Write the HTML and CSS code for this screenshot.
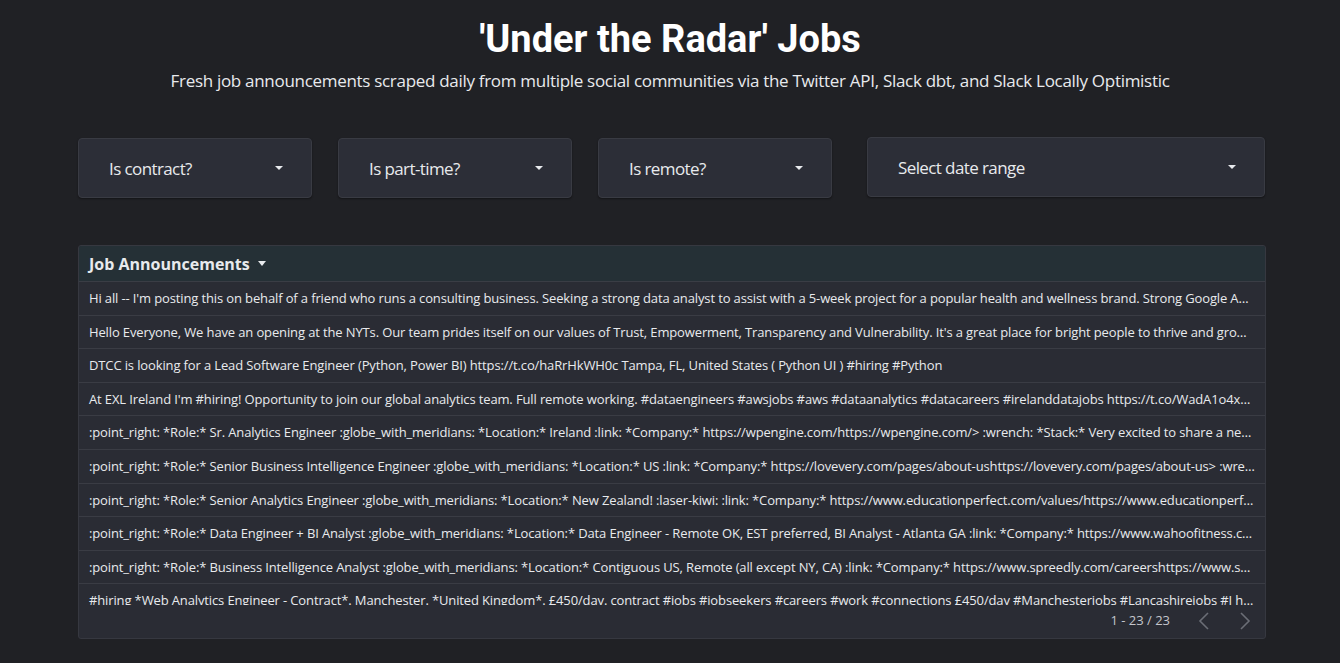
FILE: index.html
```html
<!DOCTYPE html>
<html lang="en">
<head>
<meta charset="utf-8">
<title>'Under the Radar' Jobs</title>
<link rel="stylesheet" href="styles.css">
</head>
<body>
<div class="page">
  <header class="hero">
    <h1 class="title">'Under the Radar' Jobs</h1>
    <p class="subtitle">Fresh job announcements scraped daily from multiple social communities via the Twitter API, Slack dbt, and Slack Locally Optimistic</p>
  </header>

  <div class="filters">
    <div class="filter"><span class="filter-label">Is contract?</span><span class="caret"></span></div>
    <div class="filter"><span class="filter-label">Is part-time?</span><span class="caret"></span></div>
    <div class="filter"><span class="filter-label">Is remote?</span><span class="caret"></span></div>
    <div class="filter filter-wide"><span class="filter-label">Select date range</span><span class="caret"></span></div>
  </div>

  <section class="table">
    <div class="table-head">Job Announcements <span class="caret caret-small"></span></div>
    <div class="table-body">
      <div class="row">Hi all -- I'm posting this on behalf of a friend who runs a consulting business. Seeking a strong data analyst to assist with a 5-week project for a popular health and wellness brand. Strong Google Analytics experience required.</div>
      <div class="row">Hello Everyone, We have an opening at the NYTs. Our team prides itself on our values of Trust, Empowerment, Transparency and Vulnerability. It's a great place for bright people to thrive and grow in their careers.</div>
      <div class="row">DTCC is looking for a Lead Software Engineer (Python, Power BI) https://t.co/haRrHkWH0c Tampa, FL, United States ( Python UI ) #hiring #Python</div>
      <div class="row">At EXL Ireland I'm #hiring! Opportunity to join our global analytics team. Full remote working. #dataengineers #awsjobs #aws #dataanalytics #datacareers #irelanddatajobs https://t.co/WadA1o4xQz #analyticsjobs</div>
      <div class="row">:point_right: *Role:* Sr. Analytics Engineer :globe_with_meridians: *Location:* Ireland :link: *Company:* https://wpengine.com/https://wpengine.com/&gt; :wrench: *Stack:* Very excited to share a new opening</div>
      <div class="row">:point_right: *Role:* Senior Business Intelligence Engineer :globe_with_meridians: *Location:* US :link: *Company:* https://lovevery.com/pages/about-ushttps://lovevery.com/pages/about-us&gt; :wrench: *Stack:*</div>
      <div class="row">:point_right: *Role:* Senior Analytics Engineer :globe_with_meridians: *Location:* New Zealand! :laser-kiwi: :link: *Company:* https://www.educationperfect.com/values/https://www.educationperfect.com/values/</div>
      <div class="row">:point_right: *Role:* Data Engineer + BI Analyst :globe_with_meridians: *Location:* Data Engineer - Remote OK, EST preferred, BI Analyst - Atlanta GA :link: *Company:* https://www.wahoofitness.com/</div>
      <div class="row">:point_right: *Role:* Business Intelligence Analyst :globe_with_meridians: *Location:* Contiguous US, Remote (all except NY, CA) :link: *Company:* https://www.spreedly.com/careershttps://www.spreedly.com/careers</div>
      <div class="row">#hiring *Web Analytics Engineer - Contract*. Manchester. *United Kingdom*. £450/day. contract #jobs #jobseekers #careers #work #connections £450/day #Manchesterjobs #Lancashirejobs #I have a new role</div>
    </div>
    <div class="table-foot">
      <span class="pager-text">1 - 23 / 23</span>
      <svg class="chev" width="12" height="18" viewBox="0 0 12 18"><path d="M10 1 L2 9 L10 17" fill="none" stroke="#6b6e76" stroke-width="1.6"/></svg>
      <svg class="chev" width="12" height="18" viewBox="0 0 12 18"><path d="M2 1 L10 9 L2 17" fill="none" stroke="#6b6e76" stroke-width="1.6"/></svg>
    </div>
  </section>
</div>
</body>
</html>
```

FILE: styles.css
```css
html, body {
  margin: 0;
  padding: 0;
  background: #202125;
  color: #e8eaed;
}

.page {
  width: 1340px;
  height: 663px;
  overflow: hidden;
  font-family: "Open Sans", "Noto Sans", sans-serif;
}

.hero {
  text-align: center;
  padding-top: 19px;
}

.title {
  margin: 0;
  font-family: Roboto, "Open Sans", sans-serif;
  font-weight: 700;
  font-size: 38px;
  line-height: 40px;
  color: #ffffff;
}

.subtitle {
  margin: 11px 0 0;
  font-size: 17px;
  line-height: 22px;
  color: #e8eaed;
  letter-spacing: -0.3px;
}

.filters {
  display: flex;
  align-items: center;
  gap: 26px;
  margin: 46px 74px 0 78px;
}

.filter {
  box-sizing: border-box;
  width: 234px;
  height: 60px;
  display: flex;
  align-items: center;
  justify-content: space-between;
  padding: 0 28px 0 30px;
  background: #2c2e37;
  border: 1px solid #393b43;
  border-radius: 4px;
  box-shadow: 0 1px 2px rgba(0,0,0,0.4);
}

.filter:nth-child(3) {
  margin-right: 9px;
}

.filter-wide {
  width: 398px;
  margin-top: -2px;
}

.filter-label {
  font-size: 17px;
  letter-spacing: -0.6px;
  color: #e8eaed;
}

.caret {
  width: 0;
  height: 0;
  border-left: 4.5px solid transparent;
  border-right: 4.5px solid transparent;
  border-top: 4.5px solid #e8eaed;
}

.caret-small {
  display: inline-block;
  margin-left: 6px;
  vertical-align: 3px;
  border-left-width: 4px;
  border-right-width: 4px;
  border-top-width: 5px;
}

.table {
  box-sizing: border-box;
  margin: 47px 74px 0 78px;
  height: 394px;
  background: #2a2c34;
  border: 1px solid #363840;
  border-radius: 3px;
  display: flex;
  flex-direction: column;
  overflow: hidden;
}

.table-head {
  height: 35px;
  flex: none;
  display: flex;
  align-items: center;
  padding-left: 10px;
  background: #253036;
  border-bottom: 1px solid #3a3d45;
  font-weight: 700;
  font-size: 16px;
  color: #e8eaed;
}

.table-head .caret {
  margin-left: 8px;
}

.table-body {
  height: 323px;
  flex: none;
  overflow: hidden;
}

.row {
  box-sizing: border-box;
  height: 33.6px;
  display: block;
  line-height: 32.6px;
  padding: 0 10px;
  border-bottom: 1px solid #3a3c44;
  font-size: 13px;
  letter-spacing: -0.13px;
  color: #e8eaed;
  white-space: nowrap;
  overflow: hidden;
  text-overflow: ellipsis;
}

.row:last-child {
  border-bottom: none;
  line-height: 33px;
}

.table-foot {
  flex: 1;
  display: flex;
  align-items: flex-start;
  justify-content: flex-end;
  padding: 6px 14px 0 0;
}

.pager-text {
  font-size: 13px;
  color: #c4c6cc;
  margin-right: 28px;
  line-height: 18px;
}

.chev {
  margin-left: 29px;
  margin-top: 1px;
}
.chev:first-of-type {
  margin-left: 0;
}
```
